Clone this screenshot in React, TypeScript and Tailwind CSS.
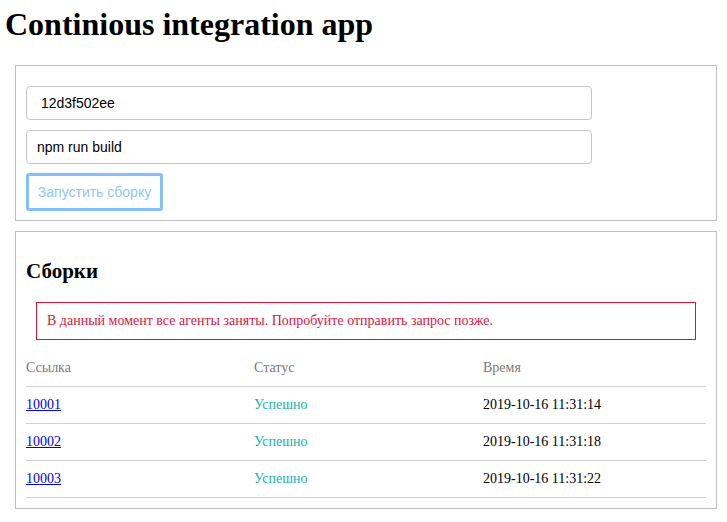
import React from "react";

const rows = [
  { id: "10001", status: "Успешно", time: "2019-10-16 11:31:14" },
  { id: "10002", status: "Успешно", time: "2019-10-16 11:31:18" },
  { id: "10003", status: "Успешно", time: "2019-10-16 11:31:22" },
];

export default function App() {
  return (
    <div className="min-h-[522px] w-full bg-white text-black font-['Liberation_Serif','Times_New_Roman',serif] overflow-hidden">
      <h1 className="ml-[5px] mt-[6px] text-[32px] leading-[36px] font-bold">
        Continious integration app
      </h1>

      <div className="ml-[15px] mt-[23px] w-[702px] border border-[#c0c0c0] px-[10px] pt-[20px] pb-[9px]">
        <input
          readOnly
          value=" 12d3f502ee"
          className="block h-[34px] w-[566px] rounded-[4px] border border-[#c6c6c6] px-[10px] text-[14px] text-black outline-none font-['Liberation_Sans',Arial,sans-serif]"
        />
        <input
          readOnly
          value="npm run build"
          className="mt-[10px] block h-[34px] w-[566px] rounded-[4px] border border-[#c6c6c6] px-[10px] text-[14px] text-black outline-none font-['Liberation_Sans',Arial,sans-serif]"
        />
        <button className="mt-[9px] flex h-[38px] w-[137px] items-center justify-center rounded-[3px] border-[3px] border-[#86c0fb] bg-white text-[14px] text-[#8fc6f5] font-['Liberation_Sans',Arial,sans-serif]">
          Запустить сборку
        </button>
      </div>

      <div className="ml-[15px] mt-[10px] w-[702px] border border-[#c0c0c0] px-[10px] pb-[10px]">
        <h2 className="mt-[27px] text-[21px] leading-[24px] font-bold">Сборки</h2>
        <div className="mx-[10px] mt-[19px] h-[38px] border border-[#dc143c] px-[10px] pt-[10px] pb-[10px] text-[14px] leading-[16px] text-[#dc143c]">
          В данный момент все агенты заняты. Попробуйте отправить запрос позже.
        </div>
        <div className="mt-[10px] text-[14px] leading-[16px]">
          <div className="grid grid-cols-[228px_229px_1fr] border-b border-[#d0d0d0] text-[#7a7a7a]">
            <div className="pt-[10px] pb-[10px]">Ссылка</div>
            <div className="pt-[10px] pb-[10px]">Статус</div>
            <div className="pt-[10px] pb-[10px]">Время</div>
          </div>
          {rows.map((r) => (
            <div
              key={r.id}
              className="grid grid-cols-[228px_229px_1fr] border-b border-[#d0d0d0]"
            >
              <div className="pt-[10px] pb-[10px]">
                <a href="#" className="text-[#0000ee] underline">
                  {r.id}
                </a>
              </div>
              <div className="pt-[10px] pb-[10px] text-[#20b2aa]">{r.status}</div>
              <div className="pt-[10px] pb-[10px] text-black">{r.time}</div>
            </div>
          ))}
        </div>
      </div>
    </div>
  );
}
